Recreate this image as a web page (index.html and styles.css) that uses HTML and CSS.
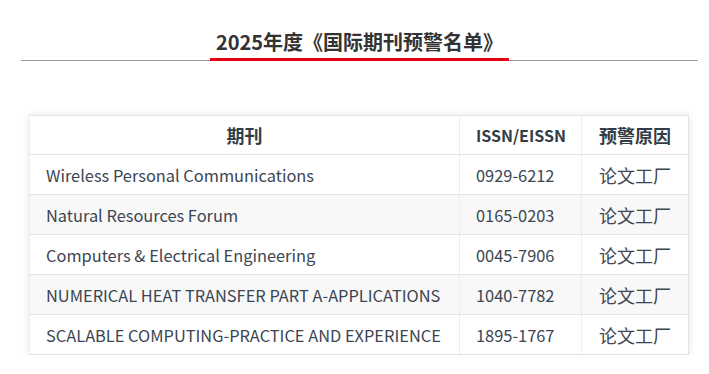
FILE: index.html
```html
<!DOCTYPE html>
<html lang="zh-CN">
<head>
<meta charset="utf-8">
<title>2025年度《国际期刊预警名单》</title>
<link rel="stylesheet" href="styles.css">
</head>
<body>
<div class="page">
  <div class="heading">
    <h2 class="heading-title">2025年度《国际期刊预警名单》</h2>
  </div>
  <div class="table-wrap">
    <table class="journals">
      <colgroup>
        <col class="c-name">
        <col class="c-issn">
        <col class="c-reason">
      </colgroup>
      <thead>
        <tr><th>期刊</th><th class="latin">ISSN/EISSN</th><th>预警原因</th></tr>
      </thead>
      <tbody>
        <tr><td>Wireless Personal Communications</td><td>0929-6212</td><td class="reason">论文工厂</td></tr>
        <tr><td>Natural Resources Forum</td><td>0165-0203</td><td class="reason">论文工厂</td></tr>
        <tr><td>Computers &amp; Electrical Engineering</td><td>0045-7906</td><td class="reason">论文工厂</td></tr>
        <tr><td>NUMERICAL HEAT TRANSFER PART A-APPLICATIONS</td><td>1040-7782</td><td class="reason">论文工厂</td></tr>
        <tr><td>SCALABLE COMPUTING-PRACTICE AND EXPERIENCE</td><td>1895-1767</td><td class="reason">论文工厂</td></tr>
      </tbody>
    </table>
  </div>
</div>
</body>
</html>
```
FILE: styles.css
```css
html, body {
  margin: 0;
  padding: 0;
  background: #ffffff;
}

body {
  font-family: "Noto Sans CJK SC", "Noto Sans", sans-serif;
  color: #3b4652;
}

.page {
  width: 677px;
  margin-left: 21px;
  padding-top: 28px;
}

.heading {
  display: flex;
  justify-content: center;
  border-bottom: 1px solid #9a9a9a;
}

.heading-title {
  margin: 0 0 -1px 0;
  padding: 0 6px 2px 6px;
  font-size: 20px;
  line-height: 28px;
  font-weight: 700;
  color: #333333;
  border-bottom: 3px solid #e60012;
}

.table-wrap {
  margin-top: 54px;
  margin-left: 8px;
  width: 659px;
}

.journals {
  width: 659px;
  table-layout: fixed;
  border-collapse: collapse;
  border: 1px solid #e3e3e3;
  box-shadow: 0 0 8px rgba(0, 0, 0, 0.10);
  background: #ffffff;
  font-size: 16.4px;
}

.c-name { width: 430px; }
.c-issn { width: 122px; }
.c-reason { width: 107px; }

.journals th,
.journals td {
  height: 39px;
  padding: 0 16px;
  border-bottom: 1px solid #e2e2e2;
  border-left: 1px solid #eeeeee;
  white-space: nowrap;
  overflow: hidden;
  line-height: 24px;
}

.journals th {
  height: 38px;
  font-size: 18px;
  font-weight: 700;
  text-align: center;
  color: #333d47;
}

.journals th.latin {
  font-size: 16px;
}

.journals td {
  text-align: left;
  font-weight: 400;
}

.journals td.reason {
  padding-left: 17px;
  font-size: 18px;
}

.journals tbody tr:nth-child(even) td {
  background: #f8f8f8;
}
```
